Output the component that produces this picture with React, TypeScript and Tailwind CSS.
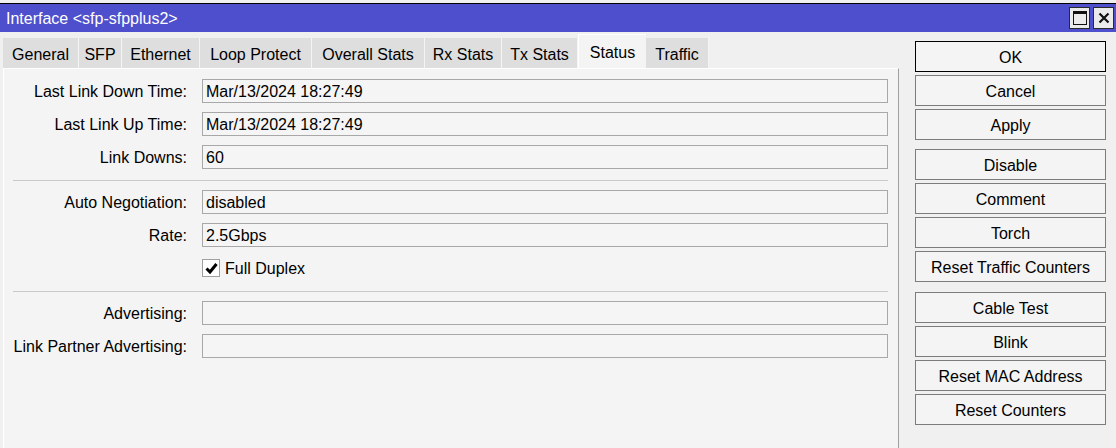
import React from 'react';

const font = { fontFamily: '"Liberation Sans", Arial, sans-serif' };

const tabs = [
  { label: 'General', w: 76 },
  { label: 'SFP', w: 43 },
  { label: 'Ethernet', w: 78 },
  { label: 'Loop Protect', w: 112 },
  { label: 'Overall Stats', w: 113 },
  { label: 'Rx Stats', w: 77 },
  { label: 'Tx Stats', w: 76 },
  { label: 'Status', w: 68, active: true },
  { label: 'Traffic', w: 63 },
];

const buttonGroups = [
  ['OK', 'Cancel', 'Apply'],
  ['Disable', 'Comment', 'Torch', 'Reset Traffic Counters'],
  ['Cable Test', 'Blink', 'Reset MAC Address', 'Reset Counters'],
];

function Field({ label, value, className = '' }: { label: string; value?: string; className?: string }) {
  return (
    <div className={`flex items-center h-[24px] ${className}`}>
      <div className="w-[174px] text-right whitespace-nowrap pt-[2px]">{label}</div>
      <div className="ml-[15px] w-[686px] h-[24px] border border-[#a8a8a8] bg-[#f5f5f5] px-[3px] pt-[1px] leading-[21px] whitespace-nowrap">
        {value}
      </div>
    </div>
  );
}

function Separator({ className = '' }: { className?: string }) {
  return <div className={`mr-[10px] h-px bg-[#c9c9c9] ${className}`} />;
}

export default function App() {
  return (
    <div className="w-[1116px] h-[448px] bg-[#f0f0f0] pt-[3px] overflow-hidden text-[16px] text-black" style={font}>
      <div className="border-t border-black">
        {/* Title bar */}
        <div className="h-[28px] bg-[#4e4fcc] flex items-center justify-between pl-[6px] pr-[2px]">
          <span className="text-white text-[16px] leading-none pt-[1px]">Interface &lt;sfp-sfpplus2&gt;</span>
          <div className="flex gap-[3px]">
            <div className="w-[21px] h-[22px] border border-[#2a2a2a] bg-[#ebebeb] flex items-center justify-center">
              <svg width="14" height="14" viewBox="0 0 14 14">
                <rect x="0.5" y="0.5" width="13" height="13" fill="none" stroke="#111" strokeWidth="1" />
                <rect x="0" y="0" width="14" height="3" fill="#111" />
              </svg>
            </div>
            <div className="w-[21px] h-[22px] border border-[#2a2a2a] bg-[#ebebeb] flex items-center justify-center">
              <svg width="12" height="12" viewBox="0 0 12 12">
                <path d="M1.5 1.5 L10.5 10.5 M10.5 1.5 L1.5 10.5" stroke="#111" strokeWidth="2.2" />
              </svg>
            </div>
          </div>
        </div>

        <div className="flex">
          {/* Left: tabs + page */}
          <div className="w-[899px]">
            <div className="flex items-end h-[36px] pl-[3px]">
              {tabs.map((t) =>
                t.active ? (
                  <div
                    key={t.label}
                    className="h-[34px] bg-[#f4f4f4] border-t border-l border-white flex justify-center pt-[6px] shrink-0 whitespace-nowrap"
                    style={{ width: t.w }}
                  >
                    {t.label}
                  </div>
                ) : (
                  <div
                    key={t.label}
                    className="h-[30px] bg-[#dedede] border-r border-[#f4f4f4] flex items-center justify-center pt-[3px] shrink-0 whitespace-nowrap"
                    style={{ width: t.w }}
                  >
                    {t.label}
                  </div>
                )
              )}
            </div>
            <div className="ml-[3px] h-[380px] border-t border-l border-white border-r border-r-[#a0a0a0] bg-[#f4f4f4] pl-[9px] pt-[10px]">
              <Field label="Last Link Down Time:" value="Mar/13/2024 18:27:49" />
              <Field label="Last Link Up Time:" value="Mar/13/2024 18:27:49" className="mt-[9px]" />
              <Field label="Link Downs:" value="60" className="mt-[9px]" />
              <Separator className="mt-[11px]" />
              <Field label="Auto Negotiation:" value="disabled" className="mt-[9px]" />
              <Field label="Rate:" value="2.5Gbps" className="mt-[9px]" />
              <div className="flex items-center h-[24px] mt-[9px] pl-[189px]">
                <div className="w-[18px] h-[18px] border border-[#a0a0a0] bg-white flex items-center justify-center">
                  <svg width="13" height="13" viewBox="0 0 13 13">
                    <path d="M1.5 6.5 L5 10 L11.5 2" fill="none" stroke="#000" strokeWidth="3" />
                  </svg>
                </div>
                <span className="ml-[5px] pt-[2px]">Full Duplex</span>
              </div>
              <Separator className="mt-[11px]" />
              <Field label="Advertising:" className="mt-[9px]" />
              <Field label="Link Partner Advertising:" className="mt-[9px]" />
            </div>
          </div>

          {/* Right: buttons */}
          <div className="pl-[16px] pt-[9px] w-[207px]">
            {buttonGroups.map((group, gi) => (
              <div key={gi} className={`flex flex-col gap-[3px] ${gi === 1 ? 'mt-[9px]' : gi === 2 ? 'mt-[10px]' : ''}`}>
                {group.map((b) => (
                  <div
                    key={b}
                    className={`w-[191px] h-[31px] flex items-center justify-center pt-[2px] bg-[#f4f4f4] border whitespace-nowrap ${
                      b === 'OK' ? 'border-black' : 'border-[#7c7c7c]'
                    }`}
                  >
                    {b}
                  </div>
                ))}
              </div>
            ))}
          </div>
        </div>
      </div>
    </div>
  );
}
